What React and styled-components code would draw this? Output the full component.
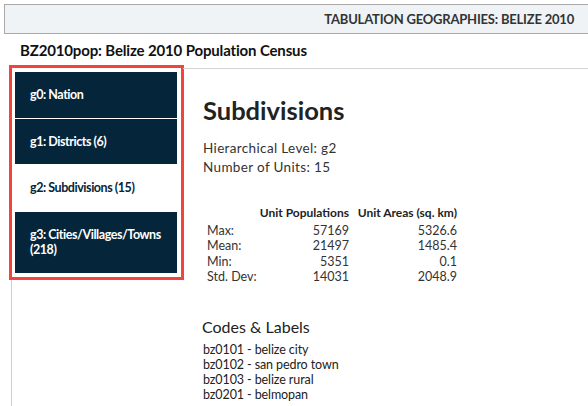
import React from "react";
import styled, { createGlobalStyle } from "styled-components";

const GlobalStyle = createGlobalStyle`
html, body {
  margin: 0;
  padding: 0;
  background: #ffffff;
}
body {
  font-family: Lato, "Open Sans", sans-serif;
  color: #2b2b2b;
}
* {
  box-sizing: border-box;
}
`;

const navy = "#05253a";

const TopBar = styled.div`
  margin: 4px 0 0 4px;
  height: 30px;
  display: flex;
  align-items: center;
  justify-content: flex-end;
  padding-right: 14px;
  background: #eff3f6;
  border: 1px solid #a9a9a9;
  border-right: none;
  font-size: 13px;
  font-weight: 700;
  letter-spacing: -0.2px;
  color: #333;
  text-transform: uppercase;
`;

const Title = styled.h1`
  margin: 0;
  padding: 7px 0 0 20px;
  height: 34px;
  font-size: 15px;
  font-weight: 700;
  letter-spacing: -0.15px;
  color: #111;
`;

const Body = styled.div`
  display: flex;
  align-items: flex-start;
`;

const Sidebar = styled.aside`
  margin-left: 11px;
  width: 172px;
  flex-shrink: 0;
  align-self: stretch;
  min-height: 338px;
  border-left: 1px solid #cfcfcf;
`;

const Highlight = styled.div`
  margin: -3px 0 0 -3px;
  width: 175px;
  padding: 4px 4px 4px 3px;
  border: 3px solid #f4433a;
  background: #fff;
`;

const NavItem = styled.div`
  padding: 15px;
  line-height: 15.5px;
  font-size: 12.5px;
  font-weight: 700;
  letter-spacing: -0.45px;
  color: ${p => (p.active ? navy : "#ffffff")};
  background: ${p => (p.active ? "#ffffff" : navy)};
  border-bottom: 1px solid #ffffff;
  &:last-child {
    border-bottom: none;
  }
`;

const Main = styled.main`
  flex: 1;
  border-top: 1px solid #d4d4d4;
  padding: 26px 0 0 20px;
`;

const Heading = styled.h2`
  margin: 0;
  font-size: 25.5px;
  line-height: 30px;
  font-weight: 700;
  color: #222;
`;

const Meta = styled.div`
  margin-top: 14px;
  font-size: 13.5px;
  line-height: 19px;
  letter-spacing: 0.35px;
  color: #333;
`;

const Stats = styled.div`
  margin: 28px 0 0 4px;
  display: grid;
  grid-template-columns: 52px 90px 108px;
  font-size: 12.5px;
  line-height: 15.4px;
  color: #333;
`;

const Head = styled.div`
  font-size: 12px;
  font-weight: 700;
  text-align: right;
  color: #222;
  padding-bottom: 2.5px;
  white-space: nowrap;
`;

const Label = styled.div`
  white-space: nowrap;
`;

const Num = styled.div`
  text-align: right;
`;

const SubHeading = styled.h3`
  margin: 32px 0 0 -1px;
  font-size: 16px;
  line-height: 20px;
  font-weight: 400;
  color: #222;
`;

const CodeList = styled.ul`
  list-style: none;
  margin: 5px 0 0;
  padding: 0;
  font-size: 12.5px;
  line-height: 15.3px;
  letter-spacing: -0.1px;
  color: #222;
`;

const nav = [
  { label: "g0: Nation" },
  { label: "g1: Districts (6)" },
  { label: "g2: Subdivisions (15)", active: true },
  { label: "g3: Cities/Villages/Towns (218)" },
];

const stats = [
  ["Max:", "57169", "5326.6"],
  ["Mean:", "21497", "1485.4"],
  ["Min:", "5351", "0.1"],
  ["Std. Dev:", "14031", "2048.9"],
];

const codes = [
  "bz0101 - belize city",
  "bz0102 - san pedro town",
  "bz0103 - belize rural",
  "bz0201 - belmopan",
];

function App() {
  return (
    <React.Fragment>
      <GlobalStyle />
      <TopBar>Tabulation Geographies: Belize 2010</TopBar>
      <Title>BZ2010pop: Belize 2010 Population Census</Title>
      <Body>
        <Sidebar>
          <Highlight>
            {nav.map(item => (
              <NavItem key={item.label} active={item.active}>
                {item.label}
              </NavItem>
            ))}
          </Highlight>
        </Sidebar>
        <Main>
          <Heading>Subdivisions</Heading>
          <Meta>
            <div>Hierarchical Level: g2</div>
            <div>Number of Units: 15</div>
          </Meta>
          <Stats>
            <div />
            <Head>Unit Populations</Head>
            <Head>Unit Areas (sq. km)</Head>
            {stats.map(row => (
              <React.Fragment key={row[0]}>
                <Label>{row[0]}</Label>
                <Num>{row[1]}</Num>
                <Num>{row[2]}</Num>
              </React.Fragment>
            ))}
          </Stats>
          <SubHeading>Codes &amp; Labels</SubHeading>
          <CodeList>
            {codes.map(c => (
              <li key={c}>{c}</li>
            ))}
          </CodeList>
        </Main>
      </Body>
    </React.Fragment>
  );
}

export default App;
